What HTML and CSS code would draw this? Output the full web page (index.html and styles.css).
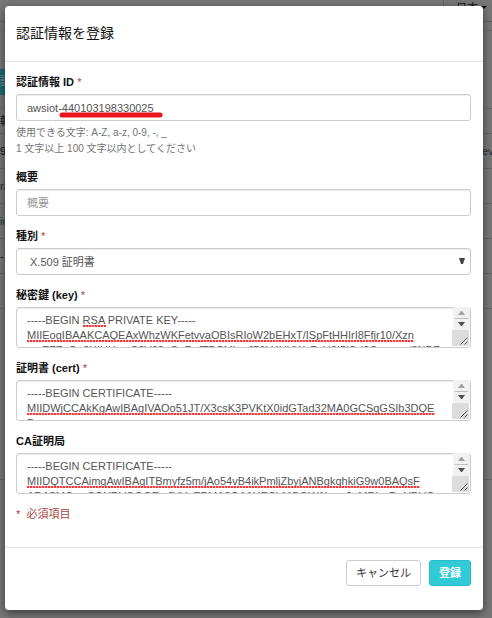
FILE: index.html
```html
<!DOCTYPE html>
<html lang="ja">
<head>
<meta charset="utf-8">
<meta name="viewport" content="width=device-width, initial-scale=1">
<title>認証情報を登録</title>
<link rel="stylesheet" href="styles.css">
</head>
<body>
<div class="page">
  <div class="page-top"><span class="language">日本 <i class="caret"></i></span></div>
  <div class="page-gap"></div>
  <div class="page-action"><span class="page-button">証</span></div>
  <div class="row row-head"><span>報</span></div>
  <div class="row"><span>9</span><span class="row-end">evi</span></div>
  <div class="row"><span class="link">ric</span></div>
  <div class="row"><span class="link">ic</span></div>
  <div class="row"><span>-1</span></div>
  <div class="row"></div>
  <div class="row row-tall"></div>
</div>
<main class="modal" role="dialog" aria-labelledby="title">
  <header class="modal-header"><h1 id="title">認証情報を登録</h1></header>
  <form class="modal-body">
    <div class="field">
      <label for="cred">認証情報 ID <span class="required">*</span></label>
      <div class="control">
        <input id="cred" type="text" value="awsiot-440103198330025">
        <svg class="marker" width="104" height="6" viewBox="0 0 104 6"><path d="M3 3H101" stroke="#e8161c" stroke-width="5" stroke-linecap="round"/></svg>
      </div>
      <p class="help">使用できる文字: A-Z, a-z, 0-9, -, _<br>1 文字以上 100 文字以内としてください</p>
    </div>
    <div class="field">
      <label for="summary">概要</label>
      <input id="summary" type="text" placeholder="概要">
    </div>
    <div class="field">
      <label for="kind">種別 <span class="required">*</span></label>
      <div class="control">
        <select id="kind"><option>X.509 証明書</option></select>
        <svg class="arrow" width="6" height="6" viewBox="0 0 6 6"><path d="M0 0H6L4 6H2Z" fill="#444"/></svg>
      </div>
    </div>
    <div class="field">
      <label for="key">秘密鍵 (key) <span class="required">*</span></label>
      <div class="control">
        <textarea id="key" spellcheck="false">-----BEGIN RSA PRIVATE KEY-----
MIIEogIBAAKCAQEAxWhzWKFetvvaOBIsRIoW2bEHxT/ISpFtHHIrI8Ffjr10/Xzn
mpFZZpGo2XIUHxmC8V08oGpDofTBCMkmJ50V4UYWvZaU8I5iQd3Gomqm/8NBZ</textarea>
        <i class="squiggle squiggle-word"></i><i class="squiggle squiggle-key"></i>
        <svg class="scroll" viewBox="0 0 18 39"><use href="#scrollbar"/></svg>
      </div>
    </div>
    <div class="field">
      <label for="cert">証明書 (cert) <span class="required">*</span></label>
      <div class="control">
        <textarea id="cert" spellcheck="false">-----BEGIN CERTIFICATE-----
MIIDWjCCAkKgAwIBAgIVAOo51JT/X3csK3PVKtX0idGTad32MA0GCSqGSIb3DQE
B</textarea>
        <i class="squiggle squiggle-cert"></i>
        <svg class="scroll" viewBox="0 0 18 39"><use href="#scrollbar"/></svg>
      </div>
    </div>
    <div class="field">
      <label for="ca">CA証明局</label>
      <div class="control">
        <textarea id="ca" spellcheck="false">-----BEGIN CERTIFICATE-----
MIIDQTCCAimgAwIBAgITBmyfz5m/jAo54vB4ikPmljZbyjANBgkqhkiG9w0BAQsF
ADA5MQswCQYDVQQGEwJVUzEPMA0GA1UEChMGQW1hem9uMRkwFwYDVQ</textarea>
        <i class="squiggle squiggle-ca"></i>
        <svg class="scroll" viewBox="0 0 18 39">
          <g id="scrollbar">
            <path fill="#f1f1f1" d="M1 0H18V24H1Z"/>
            <path fill="#dcdcdc" d="M0 23H17V39H0Z"/>
            <path fill="#a3a3a3" d="M6 8L9 4H10L13 8Z"/>
            <path fill="#c1c1c1" d="M3 11H16V12H3Z"/>
            <path fill="#505050" d="M6 15H13L10 19H9Z"/>
            <path stroke="#555" d="M8.500 37.500L15.500 30.500M12.500 37.500L15.500 34.500" fill="none"/>
          </g>
        </svg>
      </div>
    </div>
    <p class="note">*&nbsp; 必須項目</p>
  </form>
  <footer class="modal-footer">
    <button type="button">キャンセル</button>
    <button type="button" class="primary">登録</button>
  </footer>
</main>
</body>
</html>
```
FILE: styles.css
```css
* { box-sizing: border-box; }
body {
  margin: 0;
  min-height: 100vh;
  overflow: hidden;
  background: #777;
  font: 11px/16px "Liberation Sans", "Noto Sans CJK JP", sans-serif;
  color: #111;
}
.page { position: absolute; inset: 0; z-index: -1; overflow: hidden; }
.page-top { display: flex; justify-content: flex-end; height: 22px; border-bottom: 1px solid #606060; }
.language { width: 49px; padding: 0 0 0 12px; border-left: 1px solid #606060; line-height: 16px; }
.caret { display: inline-block; border: 3px solid transparent; border-top-color: #111; }
.page-gap { height: 9px; border-bottom: 1px solid #696969; }
.page-action { height: 78px; padding-top: 38px; border-bottom: 1px solid #696969; }
.page-button { display: block; width: 50px; height: 26px; background: #196d73; color: #888; line-height: 24px; }
.row { display: flex; justify-content: space-between; height: 35px; border-bottom: 1px solid #666; line-height: 35px; }
.row-head { height: 25px; line-height: 25px; }
.row-tall { height: 171px; }
.row-end { width: 10px; white-space: nowrap; color: #222b38; }
.link { color: #183347; }
.modal {
  margin: 6px 9px 0 5px;
  border-radius: 4px;
  background: #fff;
  box-shadow: 0 3px 10px rgba(0, 0, 0, 0.5);
}
.modal-header { padding: 17px 11px; border-bottom: 1px solid #e5e5e5; }
h1 { margin: 0; font-size: 14px; font-weight: 400; line-height: 21px; }
.modal-body { padding: 12px 12px 25px 11px; }
.field { margin-bottom: 12px; }
label { display: block; margin-bottom: 4px; font-weight: 700; }
.required { color: #a94442; font-weight: 400; }
.control { position: relative; }
input, select, textarea {
  display: block;
  width: 100%;
  height: 27px;
  margin: 0;
  padding: 4px 10px;
  border: 1px solid #ccc;
  border-radius: 3px;
  background: #fff;
  color: #555;
  font: inherit;
  box-shadow: inset 0 1px 1px rgba(0, 0, 0, 0.075);
}
input::placeholder { color: #999; }
select { padding: 4px 13px; appearance: none; }
textarea { height: 41px; padding: 5px 30px 0 10px; overflow: hidden; resize: none; line-height: 15px; white-space: pre; }
.marker { position: absolute; left: 43px; top: 18px; }
.arrow { position: absolute; right: 6px; top: 10px; }
.scroll { position: absolute; right: 1px; top: 0; width: 18px; height: 39px; }
.squiggle {
  position: absolute;
  left: 11px;
  top: 33px;
  height: 2px;
  background: repeating-linear-gradient(90deg, #f33 0 2px, #fbb 2px 3px);
}
.squiggle-word { left: 67px; top: 18px; width: 23px; }
.squiggle-key { width: 387px; }
.squiggle-cert { width: 408px; }
.squiggle-ca { width: 393px; }
.help { margin: 4px 0 0; color: #737373; font-size: 10px; }
.note { margin: 0; color: #a94442; }
.modal-footer { display: flex; justify-content: flex-end; gap: 8px; padding: 12px 12px 24px; border-top: 1px solid #e5e5e5; }
button {
  height: 26px;
  padding: 0 9px;
  border: 1px solid #ccc;
  border-radius: 3px;
  background: #fff;
  color: #333;
  font: inherit;
}
.primary { border-color: #25bdc9; background: #31cad6; color: #fff; font-weight: 700; }
```
